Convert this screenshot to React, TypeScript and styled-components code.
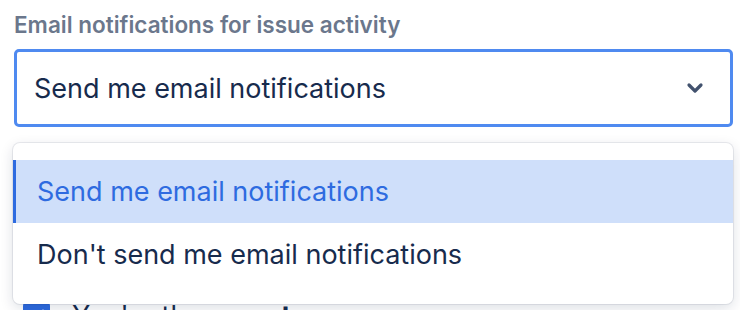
import React from 'react';
import styled, { createGlobalStyle } from 'styled-components';

const GlobalStyle = createGlobalStyle`
  html, body {
    margin: 0;
    padding: 0;
    background: #ffffff;
    font-family: Inter, "Noto Sans", "Liberation Sans", sans-serif;
  }
`;

const Page = styled.div`
  width: 740px;
  height: 310px;
  overflow: hidden;
  padding: 10px 7px 0 14px;
  box-sizing: border-box;
`;

const Label = styled.div`
  font-size: 22.5px;
  font-weight: 600;
  color: #6b778c;
  line-height: 30px;
  margin-bottom: 9px;
`;

const Field = styled.div`
  position: relative;
`;

const SelectBox = styled.div`
  height: 78px;
  box-sizing: border-box;
  border: 3px solid #4f8af0;
  border-radius: 5px;
  display: flex;
  align-items: center;
  justify-content: space-between;
  padding: 0 26px 0 17px;
  font-size: 27px;
  color: #172b4d;
`;

const Chevron = styled.svg`
  width: 18px;
  height: 12px;
  color: #42526e;
`;

const Menu = styled.div`
  position: absolute;
  left: -1px;
  right: 0;
  top: calc(100% + 16px);
  background: #ffffff;
  border-radius: 7px;
  padding: 17px 0 18px;
  box-shadow: 0 0 0 1px rgba(9, 30, 66, 0.08), 0 4px 14px rgba(9, 30, 66, 0.14);
  z-index: 2;
`;

const Option = styled.div<{ $selected?: boolean }>`
  height: 63px;
  display: flex;
  align-items: center;
  padding-left: ${(p) => (p.$selected ? '21px' : '24px')};
  font-size: 27px;
  color: ${(p) => (p.$selected ? '#2e6be0' : '#172b4d')};
  background: ${(p) => (p.$selected ? '#cfdffa' : 'transparent')};
  border-left: ${(p) => (p.$selected ? '3px solid #2e6be0' : 'none')};
`;

const CheckList = styled.div`
  margin-top: 171px;
  display: flex;
  flex-direction: column;
  gap: 16px;
  padding-left: 9px;
`;

const CheckRow = styled.div`
  display: flex;
  align-items: center;
  gap: 22px;
  font-size: 27px;
  color: #172b4d;
  height: 34px;
`;

const CheckBox = styled.span`
  width: 27px;
  height: 27px;
  border-radius: 4px;
  background: #2e6be0;
  display: flex;
  align-items: center;
  justify-content: center;
  flex-shrink: 0;
`;

export default function App() {
  return (
    <Page>
      <GlobalStyle />
      <Label>Email notifications for issue activity</Label>
      <Field>
        <SelectBox>
          <span>Send me email notifications</span>
          <Chevron viewBox="0 0 18 12" fill="none">
            <path
              d="M3 3l6 6 6-6"
              stroke="currentColor"
              strokeWidth="3.2"
              strokeLinecap="round"
              strokeLinejoin="round"
            />
          </Chevron>
        </SelectBox>
        <Menu>
          <Option $selected>Send me email notifications</Option>
          <Option>Don't send me email notifications</Option>
        </Menu>
      </Field>
      <CheckList>
        <CheckRow>
          <CheckBox>
            <svg width="16" height="12" viewBox="0 0 16 12" fill="none">
              <path d="M2 6l4 4 8-8" stroke="#fff" strokeWidth="3" strokeLinecap="round" strokeLinejoin="round" />
            </svg>
          </CheckBox>
          <span>
            You're the <b>reporter</b>
          </span>
        </CheckRow>
      </CheckList>
    </Page>
  );
}
